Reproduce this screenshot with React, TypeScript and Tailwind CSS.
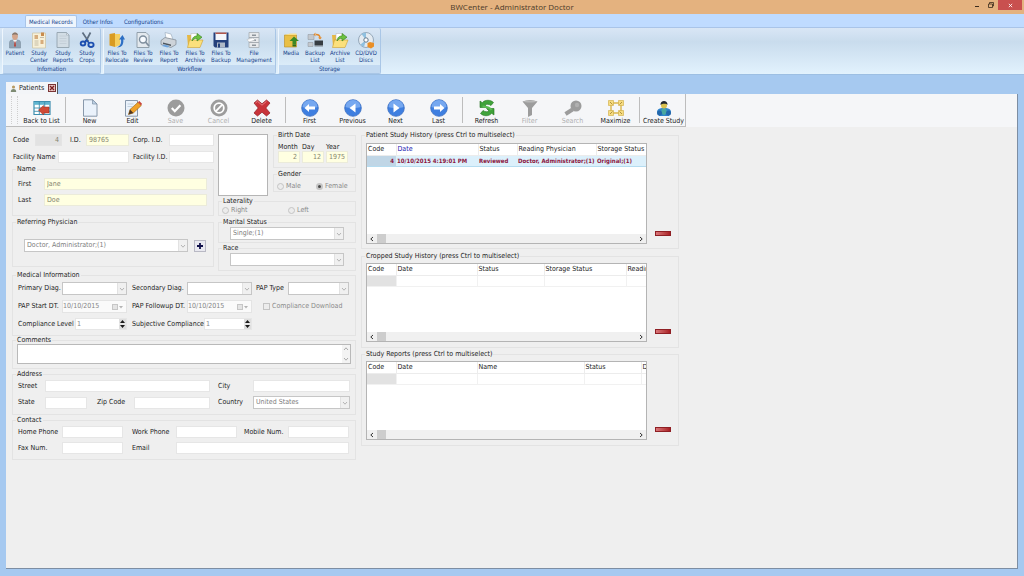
import { useId } from "react";
import type { ReactNode } from "react";
import clsx from "clsx";

/* ---------- icons ---------- */

type IconProps = { children: ReactNode; className?: string };

const Icon = ({ children, className = "size-[18px]" }: IconProps) => (
  <svg viewBox="0 0 18 18" className={className} fill="none" aria-hidden="true">
    {children}
  </svg>
);

const PatientIcon = () => (
  <Icon>
    <path d="M3.500 17V11.500Q3.500 9 6.500 9h5q3 0 3 2.500V17z" fill="#8fa3b4" stroke="#7a8d9d" strokeWidth=".6" />
    <path d="M7 9 9 12.500 11 9z" fill="#f4f4f4" />
    <path d="M8.500 10.500h1L10 15l-1 1-1-1z" fill="#b8443a" />
    <ellipse cx="9" cy="5.200" rx="2.900" ry="3.700" fill="#d3a58c" />
    <path d="M6 4.500C6 .6 12 .6 12 4.500 11 3.200 7 3.200 6 4.500z" fill="#85776c" />
  </Icon>
);

const StudyCenterIcon = () => (
  <Icon>
    <path d="M2.500 2h13v15h-13z" fill="#f7f0d8" stroke="#cfc6a8" strokeWidth=".8" />
    <path d="M4.500 4h3.500v4H4.500zM10.500 9h3v4h-3z" fill="#d6ac7c" />
    <path d="M10 6.500h4M4.500 10h4M4.500 12h4M4.500 14h4" stroke="#b9b09b" strokeWidth=".8" />
    <path d="M11 1.500h3v3.500h-3z" fill="#c98b4c" />
  </Icon>
);

const StudyReportsIcon = () => (
  <Icon>
    <path d="M3 1.500h9.500L15 4v12.500H3z" fill="#d2dde5" stroke="#93a3ae" strokeWidth=".9" />
    <path d="M5.500 5h7M5.500 7.500h7M5.500 10h7M5.500 12.500h7" stroke="#c0ccd4" strokeWidth=".8" />
    <path d="M12.500 1.500V4H15z" fill="#f7f9fa" stroke="#93a3ae" strokeWidth=".6" />
  </Icon>
);

const ScissorsIcon = () => (
  <Icon>
    <path d="M4.500 1.500 10.500 10.500M12.500 1.500 7.500 11" stroke="#5f6f82" strokeWidth="1.700" />
    <ellipse cx="5" cy="12.500" rx="2.300" ry="2" stroke="#1d4fb0" strokeWidth="1.900" />
    <ellipse cx="13" cy="13.800" rx="2.600" ry="2.200" stroke="#1d4fb0" strokeWidth="1.900" />
    <path d="m6.500 11.200 2-2 2.600 2.800" stroke="#1d4fb0" strokeWidth="1.700" />
  </Icon>
);

const RelocateIcon = () => (
  <Icon>
    <path d="M1.500 3 7 2v14l-5.500-1.500z" fill="#d99b22" />
    <path d="M7 3h5v11l-5 2z" fill="#f6cf5e" />
    <path d="M9 16.500c3.500-1.500 4.500-4.500 4-8h-2l3.500-4.500 2.500 4.500h-1.700c.5 5-1.500 8-6.300 8z" fill="#2d6fc4" />
  </Icon>
);

const ReviewIcon = () => (
  <Icon>
    <path d="M3 1.500h9l3 3v12H3z" fill="#e3e9ee" stroke="#8a98a4" strokeWidth=".9" />
    <circle cx="9" cy="8.500" r="3.500" fill="#f7fbff" stroke="#7f8f9e" strokeWidth="1.400" />
    <path d="m11.500 11 3.500 4" stroke="#7f8f9e" strokeWidth="1.800" />
  </Icon>
);

const PrinterIcon = () => (
  <Icon>
    <path d="m5 1.500 6 1.500 2 5.500-7-1z" fill="#fdfdfd" stroke="#9fb0c2" strokeWidth=".7" />
    <path d="m1 9.500 4-3L16 9v4.500l-5 3L1 13.500z" fill="#cdd3d9" stroke="#7e878f" strokeWidth=".7" />
    <path d="m3 11.500 8 2v1.500l-8-2z" fill="#4d555d" />
    <path d="m4 13.500 5.500 1.500-2 1.500L2 15z" fill="#6da3dd" />
  </Icon>
);

const ArchiveIcon = () => (
  <Icon>
    <path d="M1 4h5l1.500 1.500H13V15H2z" fill="#e6b844" />
    <path d="M5 2.500h7v8H5z" fill="#fff" stroke="#b3b3b3" strokeWidth=".5" />
    <path d="M3.500 9h13.500L14 16.500H1.500z" fill="#fbe07c" stroke="#cf9f2f" strokeWidth=".6" />
    <path d="M6 10c.5-4 2.500-5 5-5V2.500l5 3.700-5 3.800V7.500c-2.200 0-3.500.5-5 2.500z" fill="#6cc13f" stroke="#347f1b" strokeWidth=".6" />
  </Icon>
);

const FloppyIcon = () => (
  <Icon>
    <path d="M1.500 1.500h15v15H3L1.500 15z" fill="#24407c" />
    <path d="M3.500 1.500h11V9h-11z" fill="#f4f6fa" />
    <path d="M3.500 1.500h11v1.500h-11z" fill="#b0564b" />
    <path d="M5 11.500h8v5H5z" fill="#aeb8c6" />
    <path d="M6 12.500h2v4H6z" fill="#24407c" />
  </Icon>
);

const CabinetIcon = () => (
  <Icon>
    <path d="M4 1.500h10v15H4z" fill="#e7e9eb" stroke="#a7adb3" strokeWidth=".8" />
    <path d="M4 6.500h10M4 11.500h10" stroke="#a7adb3" />
    <path d="M7 3.500h4v1.500H7zM7 8.500h4v1.500H7zM7 13.500h4V15H7z" fill="#8e959c" />
    <path d="M2 8.500 8 7l2 2-6 2z" fill="#fff" stroke="#b0b4b8" strokeWidth=".5" />
  </Icon>
);

const MediaIcon = () => (
  <Icon>
    <path d="M2.500 4h12v12h-12z" fill="#e9bf45" stroke="#b88a1e" strokeWidth=".6" />
    <path d="M2.500 4 8 2.500h6.500V4z" fill="#f7df8d" />
    <path d="m12 5.500 5 4.500h-3v3.500h-3.500V10H7.500z" fill="#3b8a25" />
    <path d="M10.500 13.500H14v2h-3.500z" fill="#2d6d1b" />
  </Icon>
);

const BackupIcon = () => (
  <Icon>
    <path d="M2 3.500h6v5H2zM2 11.500h5v4H2z" fill="#c3c8cd" stroke="#8c9298" strokeWidth=".5" />
    <path d="M8.500 9.500H17V14H8.500z" fill="#363c42" />
    <path d="M8.500 14H17v1.500H8.500z" fill="#7c848c" />
    <path d="M10 3.500c3 0 4 1 4 3.500" stroke="#e48a2a" strokeWidth="1.500" />
    <path d="M12 6.500h4L14 8.500zM9.500 1.500v4l-2-2z" fill="#e48a2a" />
  </Icon>
);

const DiscIcon = () => (
  <Icon>
    <circle cx="9" cy="9" r="7.500" fill="#e4ebf1" stroke="#8fa1b3" strokeWidth=".9" />
    <path d="M9 9 4.500 3A7.300 7.300 0 0 1 9 1.700zM9 9l-5.500 4.500A7.300 7.300 0 0 0 7 16z" fill="#8fc0e0" />
    <circle cx="9" cy="9" r="2.200" fill="#fff" stroke="#64798d" />
    <path d="m13 11 4 1v3.500l-3 2-3.500-1.500v-4z" fill="#e98f27" />
  </Icon>
);

const BackListIcon = () => (
  <Icon>
    <path d="M1 2.500h16v13H1z" fill="#fff" stroke="#3e8eaf" strokeWidth="1.200" />
    <path d="M1 3h16v2.800H1z" fill="#5fb4cf" />
    <path d="M1 9h16M1 12.300h16M6.300 2.500v13M11.700 2.500v13" stroke="#3e8eaf" strokeWidth=".9" />
    <path d="m5.500 11 5-4.500V8H16v6h-5.500v2z" fill="#cf4a36" stroke="#9e2a1b" strokeWidth=".5" />
  </Icon>
);

const NewIcon = () => (
  <Icon>
    <path d="M2.500.800h9L16 5v12.200H2.500z" fill="#eaf2fb" stroke="#7d8fa3" strokeWidth=".9" />
    <path d="M11.500.800V5H16z" fill="#bfd3e8" stroke="#7d8fa3" strokeWidth=".7" />
  </Icon>
);

const EditIcon = () => (
  <Icon>
    <path d="M1.500 1.500h12v15.700h-12z" fill="#eaf2fb" stroke="#7d8fa3" strokeWidth=".9" />
    <path d="M3.500 5h6M3.500 7.500h5" stroke="#b8c8d8" strokeWidth=".8" />
    <path d="m4.500 15.500 1.500-5 8-7.200 3.300 3.200-8 7.500z" fill="#f0a22a" stroke="#9b6415" strokeWidth=".6" />
    <path d="m14 3.300 1.300-1.300 2.700 2.800-.9 1.700z" fill="#c9433a" />
    <path d="m4.500 15.500 1.500-5L9.300 14z" fill="#4b3524" />
  </Icon>
);

const SaveIcon = () => (
  <Icon>
    <circle cx="9" cy="9" r="8.500" fill="#9c9c9c" />
    <path d="m4.800 9 3 3.200 5.600-6" stroke="#fff" strokeWidth="2.200" />
  </Icon>
);

const CancelIcon = () => (
  <Icon>
    <circle cx="9" cy="9" r="8.500" fill="#9c9c9c" />
    <circle cx="9" cy="9" r="4.800" stroke="#fff" strokeWidth="1.800" />
    <path d="m12.300 5.700-6.600 6.600" stroke="#fff" strokeWidth="1.800" />
  </Icon>
);

const DeleteIcon = () => (
  <Icon>
    <path
      d="m1 4 3.500-3L9 4.800 13.500 1 17 4l-4.200 5 4.200 5-3.500 3L9 13.200 4.500 17 1 14l4.200-5z"
      fill="#c9343a"
      stroke="#8f1c22"
      strokeWidth=".7"
    />
    <path d="M2.500 4 4.500 2.300 9 6.200l4.500-3.900" stroke="#ea8589" strokeWidth=".9" />
  </Icon>
);

const NavIcon = ({ d }: { d: string }) => (
  <Icon>
    <circle cx="9" cy="9" r="8.300" fill="#3f7fe0" stroke="#3a6dc0" strokeWidth=".8" />
    <path d="M1.500 8a7.500 7 0 0 1 15 0C13 9.500 5 9.500 1.500 8z" fill="#76a8f0" />
    <path d={d} fill="#fff" />
  </Icon>
);

const RefreshIcon = () => (
  <Icon>
    <path d="M2 8.500V2l2.300 1.700C7 .5 12.500.5 15.500 3.500L13 6.500C11 5 8.500 5 7 6l2.500 2.500z" fill="#3fa33a" stroke="#21711f" strokeWidth=".6" />
    <path d="M16 9.500V16l-2.300-1.700C11 17.500 5.500 17.500 2.500 14.500l2.500-3C7 13 9.500 13 11 12L8.500 9.500z" fill="#3fa33a" stroke="#21711f" strokeWidth=".6" />
    <path d="M4.500 7.500c4 0 7 .5 9 3.500" stroke="#5cbd55" strokeWidth="2" />
  </Icon>
);

const FilterIcon = () => (
  <Icon>
    <path d="M1.500 2.500q7.500-3 15 0L11 9v7L7 18V9z" fill="#9c9c9c" />
    <ellipse cx="9" cy="2.500" rx="6" ry="1" fill="#b8b8b8" />
  </Icon>
);

const SearchIcon = () => (
  <Icon>
    <circle cx="12" cy="7" r="5.500" fill="#9c9c9c" />
    <path d="m8.500 10.500-7 4.500" stroke="#9c9c9c" strokeWidth="4" />
    <circle cx="13" cy="6" r="2.200" fill="#b0b0b0" />
  </Icon>
);

const MaximizeIcon = () => (
  <Icon>
    <path d="M4 4h10v10H4z" stroke="#d9b64e" strokeWidth="1.400" />
    <path d="M1.500 1.500h5v5h-5zM11.500 1.500h5v5h-5zM1.500 11.500h5v5h-5zM11.500 11.500h5v5h-5z" fill="#f6dc80" stroke="#cfa93f" strokeWidth=".6" />
    <path d="m3 3 2.500 2.500M15 3l-2.500 2.500M3 15l2.500-2.500M15 15l-2.500-2.500" stroke="#a98739" strokeWidth=".9" />
  </Icon>
);

const CreateStudyIcon = () => (
  <Icon>
    <path d="M2 13q0-3.500 5-4h4q5 .5 5 4l-2 4H4z" fill="#2f83cc" />
    <path d="M7 9.500h4l1 4-3 3-3-3z" fill="#4aa8a0" />
    <circle cx="9" cy="6.500" r="3" fill="#d9c04e" />
    <path d="M5.500 6C5 .5 13 .5 12.500 6 11.500 4 7 4.500 5.500 6z" fill="#22272e" />
    <circle cx="4.500" cy="14" r="2.500" fill="#2468ab" />
    <circle cx="13.500" cy="14" r="2.500" fill="#2468ab" />
  </Icon>
);

const Chevron = ({ className }: { className?: string }) => (
  <svg viewBox="0 0 6 6" className={clsx("size-[6px]", className)} fill="none" aria-hidden="true">
    <path d="m1 2 2 2.200L5 2" stroke="currentColor" />
  </svg>
);

/* ---------- form parts ---------- */

const labelCls = "whitespace-nowrap";

type FieldProps = {
  label: string;
  value?: string;
  className?: string;
  tone?: "white" | "yellow" | "gray";
  alignRight?: boolean;
  hideLabel?: boolean;
};

// Label and text box are two neighbouring grid cells
const Field = ({ label, value = "", className, tone = "white", alignRight }: FieldProps) => {
  const id = useId();
  return (
    <>
      <label htmlFor={id} className={labelCls}>{label}</label>
      <input
        id={id}
        defaultValue={value}
        readOnly
        className={clsx(
          "h-3 w-full min-w-0 border px-[2px] text-[#85856f] outline-none",
          tone === "white" && "border-[#e6e6e6] bg-white",
          tone === "yellow" && "border-[#ebebda] bg-[#ffffe1]",
          tone === "gray" && "border-[#e4e4e4] bg-[#e2e2e2]",
          alignRight && "text-right",
          className,
        )}
      />
    </>
  );
};

const SelectBox = ({ label, value = "", hideLabel, className }: FieldProps) => {
  const id = useId();
  return (
    <>
      {!hideLabel && <label htmlFor={id} className={labelCls}>{label}</label>}
      <div className={clsx("flex h-[13px] min-w-0 border border-[#c6c6c6] bg-white", className)}>
        <select
          id={id}
          aria-label={hideLabel ? label : undefined}
          disabled
          className="min-w-0 flex-1 appearance-none px-[2px] leading-[11px] text-[#7d7d7d] opacity-100"
        >
          <option>{value}</option>
        </select>
        <span className="flex w-[9px] items-center justify-center border-l border-[#e2e2e2] bg-[#f0f0f0] text-[#b4b4b4]">
          <Chevron />
        </span>
      </div>
    </>
  );
};

const DateBox = ({ label, value }: { label: string; value: string }) => {
  const id = useId();
  return (
    <>
      <label htmlFor={id} className={labelCls}>{label}</label>
      <div className="flex h-[13px] items-center border border-[#e4e4e4] bg-[#fafafa] pr-[2px]">
        <input id={id} defaultValue={value} disabled className="w-0 flex-1 text-[#858585]" />
        <button type="button" aria-label={`Open calendar for ${label}`} className="flex items-center text-[#b4b4b4]">
          <span className="size-[6px] border border-[#c6c6c6] bg-[#e4e4e4]" />
          <svg viewBox="0 0 6 6" className="size-[6px]"><path d="M1 2h4L3 4.500z" fill="currentColor" /></svg>
        </button>
      </div>
    </>
  );
};

const SpinBox = ({ label, value, className }: { label: string; value: string; className: string }) => {
  const id = useId();
  return (
    <div className="col-span-2 flex items-center justify-between">
      <label htmlFor={id} className={labelCls}>{label}</label>
      <div className={clsx("flex h-3 items-stretch border border-[#e6e6e6] bg-white", className)}>
        <input id={id} defaultValue={value} className="w-0 flex-1 px-[1px] text-[#858585] outline-none" />
        <button type="button" aria-label={`Change ${label}`} className="w-[7px] bg-[#dedede]">
          <svg viewBox="0 0 7 10" className="h-[10px] w-[7px]">
            <path d="M1 4h5L3.500 1zM1 6h5L3.500 9z" fill="#1c1c1c" />
            <path d="M0 5h7" stroke="#fff" strokeWidth=".6" />
          </svg>
        </button>
      </div>
    </div>
  );
};

const Radio = ({ name, label, checked }: { name: string; label: string; checked?: boolean }) => (
  <label className="flex items-center gap-[2px] text-[#8a8a8a]">
    <input
      type="radio"
      name={name}
      defaultChecked={checked}
      disabled
      className="size-[7px] appearance-none rounded-full border border-[#c4c4c4] bg-[#ececec] checked:border-2 checked:bg-[#4a4a4a]"
    />
    {label}
  </label>
);

const Group = ({ title, className, children }: { title: string; className?: string; children: ReactNode }) => (
  <fieldset className={clsx("min-w-0 border border-[#e3e3e3]", className)}>
    <legend className="ml-[3px] px-[1px] leading-[8px]">{title}</legend>
    {children}
  </fieldset>
);

/* ---------- history tables ---------- */

type Column = { title: string; width: string; sorted?: boolean };

const studyColumns: Column[] = [
  { title: "Code", width: "w-[29px]" },
  { title: "Date", width: "w-[82px]", sorted: true },
  { title: "Status", width: "w-[39px]" },
  { title: "Reading Physician", width: "w-[79px]" },
  { title: "Storage Status", width: "w-auto" },
];

const croppedColumns: Column[] = [
  { title: "Code", width: "w-[29px]" },
  { title: "Date", width: "w-[81px]" },
  { title: "Status", width: "w-[67px]" },
  { title: "Storage Status", width: "w-[82px]" },
  { title: "Reading Physician", width: "w-auto" },
];

const reportColumns: Column[] = [
  { title: "Code", width: "w-[29px]" },
  { title: "Date", width: "w-[81px]" },
  { title: "Name", width: "w-[107px]" },
  { title: "Status", width: "w-[57px]" },
  { title: "Description", width: "w-auto" },
];

type HistoryProps = {
  title: string;
  columns: Column[];
  row?: string[];
  className: string;
  height: string;
};

const History = ({ title, columns, row, className, height }: HistoryProps) => (
  <Group title={title} className={className}>
    <div className="flex items-end gap-2 pr-[7px] pl-1">
      <div className={clsx("flex min-w-0 flex-1 flex-col border border-[#b4b4b4] bg-white", height)}>
        <div className="flex-1 overflow-hidden">
          <table className="w-full table-fixed border-collapse text-left whitespace-nowrap">
            <thead>
              <tr className="h-[11px]">
                {columns.map((col) => (
                  <th
                    key={col.title}
                    className={clsx(
                      "overflow-hidden border-r border-b border-[#ececec] p-0 pl-[1px] font-normal last:border-r-0",
                      col.width,
                      col.sorted && "text-[#2020b0]",
                    )}
                  >
                    {col.title}
                  </th>
                ))}
              </tr>
            </thead>
            <tbody>
              <tr className={clsx("h-[11px]", row && "bg-[#dcf0fb] text-[#8b1540]")}>
                {columns.map((col, i) => (
                  <td
                    key={col.title}
                    className={clsx(
                      "border-b p-0 pl-[1px]",
                      row ? "border-[#b5dcf0] text-[6px] font-bold" : "border-r border-[#f1f1f1] last:border-r-0",
                      i === 0 && (row ? "bg-[#c0d6e6] pr-[2px] text-right" : "bg-[#e2e2e2]"),
                    )}
                  >
                    {row?.[i]}
                  </td>
                ))}
              </tr>
            </tbody>
          </table>
        </div>
        <div className="flex h-[9px] items-center justify-between bg-[#f0f0f0] px-[2px] text-[#333]">
          <span className="flex items-center gap-[2px]">
            <Chevron className="rotate-90" />
            <span className="h-[9px] w-[9px] bg-[#cdcdcd]" />
          </span>
          <Chevron className="-rotate-90" />
        </div>
      </div>
      <button
        type="button"
        aria-label={`Remove from ${title}`}
        className="mb-2 h-[5px] w-4 border border-[#8f1f24] bg-linear-to-r from-[#d9767a] to-[#a81c24]"
      />
    </div>
  </Group>
);

/* ---------- ribbon and toolbar data ---------- */

const ribbonGroups = [
  {
    title: "Infomation",
    items: [
      { label: "Patient", icon: <PatientIcon />, width: "w-6" },
      { label: "Study Center", icon: <StudyCenterIcon />, width: "w-6" },
      { label: "Study Reports", icon: <StudyReportsIcon />, width: "w-6" },
      { label: "Study Crops", icon: <ScissorsIcon />, width: "w-6" },
    ],
  },
  {
    title: "Workflow",
    items: [
      { label: "Files To Relocate", icon: <RelocateIcon />, width: "w-[26px]" },
      { label: "Files To Review", icon: <ReviewIcon />, width: "w-[26px]" },
      { label: "Files To Report", icon: <PrinterIcon />, width: "w-[26px]" },
      { label: "Files To Archive", icon: <ArchiveIcon />, width: "w-[26px]" },
      { label: "Files To Backup", icon: <FloppyIcon />, width: "w-[26px]" },
      { label: "File Management", icon: <CabinetIcon />, width: "w-10" },
    ],
  },
  {
    title: "Storage",
    items: [
      { label: "Media", icon: <MediaIcon />, width: "w-6" },
      { label: "Backup List", icon: <BackupIcon />, width: "w-6" },
      { label: "Archive List", icon: <ArchiveIcon />, width: "w-[26px]" },
      { label: "CD/DVD Discs", icon: <DiscIcon />, width: "w-[26px]" },
    ],
  },
];

const toolbarGroups = [
  [{ label: "Back to List", icon: <BackListIcon /> }],
  [
    { label: "New", icon: <NewIcon /> },
    { label: "Edit", icon: <EditIcon /> },
    { label: "Save", icon: <SaveIcon />, disabled: true },
    { label: "Cancel", icon: <CancelIcon />, disabled: true },
    { label: "Delete", icon: <DeleteIcon /> },
  ],
  [
    { label: "First", icon: <NavIcon d="M3.500 9 8 5v2.500h6v3H8V13z" /> },
    { label: "Previous", icon: <NavIcon d="M5.500 9 11.500 4.500v9z" /> },
    { label: "Next", icon: <NavIcon d="M12.500 9 6.500 4.500v9z" /> },
    { label: "Last", icon: <NavIcon d="M14.500 9 10 5v2.500H4v3h6V13z" /> },
  ],
  [
    { label: "Refresh", icon: <RefreshIcon /> },
    { label: "Filter", icon: <FilterIcon />, disabled: true },
    { label: "Search", icon: <SearchIcon />, disabled: true },
    { label: "Maximize", icon: <MaximizeIcon /> },
  ],
  [{ label: "Create Study", icon: <CreateStudyIcon /> }],
];

/* ---------- window sections ---------- */

const TitleBar = () => (
  <header className="grid h-[14px] grid-cols-[1fr_auto_1fr] bg-[#e4b27f]">
    <h1 className="col-start-2 font-['Open_Sans',sans-serif] text-[8px] leading-[14px] text-[#4a3a2a]">
      BWCenter - Administrator Doctor
    </h1>
    <div className="flex h-[10px] justify-end pr-[2px] text-[#3b2c1c]">
      <button type="button" aria-label="Minimize" className="flex w-[14px] items-center justify-center">
        <span className="mt-[2px] h-[1px] w-1 bg-current" />
      </button>
      <button type="button" aria-label="Restore" className="flex w-[14px] items-center justify-center">
        <svg viewBox="0 0 6 6" className="size-[6px]" fill="none" stroke="currentColor" strokeWidth=".8">
          <path d="M.5 2h4v3.500h-4zM1.500 2V.5h4V4h-1" />
        </svg>
      </button>
      <button type="button" aria-label="Close" className="flex w-6 items-center justify-center bg-[#c9504f] text-white">
        <svg viewBox="0 0 6 6" className="size-[5px]" stroke="currentColor">
          <path d="m1 1 4 4m0-4L1 5" />
        </svg>
      </button>
    </div>
  </header>
);

const Ribbon = () => (
  <div className="text-[6px] text-[#15428b]">
    <nav className="flex h-[13px] items-end bg-[#bfdbff] pl-[25px]">
      <button type="button" className="h-3 rounded-t-[2px] border border-b-0 border-[#a9c4e8] bg-[#eef5fd] px-[3px]">
        Medical Records
      </button>
      <button type="button" className="h-3 px-[6px]">Other Infos</button>
      <button type="button" className="h-3 px-[5px]">Configurations</button>
    </nav>
    <div className="flex h-12 gap-[2px] border-y border-t-[#a9c4e8] border-b-[#9dbfe3] bg-linear-to-b from-[#d9e6f5] via-[#c9dced] via-30% to-[#e2f2fd] pl-[2px]">
      {ribbonGroups.map((group) => (
        <section
          key={group.title}
          className="flex flex-col rounded-[2px] border border-t-0 border-[#a9c6e6] border-l-[#eef6fd]"
        >
          <div className="flex flex-1 pt-[3px] pr-[1px]">
            {group.items.map((item) => (
              <button key={item.label} type="button" className={clsx("flex flex-col items-center", item.width)}>
                {item.icon}
                <span className="text-center leading-[7px]">{item.label}</span>
              </button>
            ))}
          </div>
          <h2 className="h-2 bg-[#c2d9f1] text-center leading-[8px]">{group.title}</h2>
        </section>
      ))}
    </div>
  </div>
);

const Toolbar = () => (
  <div className="flex bg-[#f5f6f8]">
    <div className="flex h-[33px] items-stretch border-r border-b border-[#bdbdbd] pl-[5px]" role="toolbar">
      <span className="my-[2px] mr-[2px] w-[7px] border-x border-dotted border-[#cfcfcf]" />
      {toolbarGroups.map((group, i) => (
        <div key={i} className="flex">
          {i > 0 && <span className="mx-[2px] my-[3px] w-[1px] bg-[#bdbdbd]" />}
          {group.map((item) => (
            <button
              key={item.label}
              type="button"
              disabled={"disabled" in item}
              className="flex w-[43px] flex-col items-center pt-[5px] whitespace-nowrap disabled:text-[#b0b0b0]"
            >
              {item.icon}
              <span className="leading-[9px]">{item.label}</span>
            </button>
          ))}
        </div>
      ))}
    </div>
  </div>
);

const PatientForm = () => (
  <form className="min-w-0">
    <div className="grid grid-cols-[202px_minmax(0,1fr)] gap-x-1">
      <div className="pt-[3px]">
        <div className="flex flex-col gap-[5px] pl-[1px]">
          <div className="grid grid-cols-[22px_27px_8px_16px_43px_4px_36px_1fr] items-center [&>label:nth-of-type(2)]:col-start-4 [&>label:nth-of-type(3)]:col-start-7">
            <Field label="Code" value="4" tone="gray" alignRight />
            <Field label="I.D." value="98765" tone="yellow" />
            <Field label="Corp. I.D." />
          </div>
          <div className="grid grid-cols-[45px_71px_4px_36px_1fr] items-center [&>label:nth-of-type(2)]:col-start-4">
            <Field label="Facility Name" />
            <Field label="Facility I.D." />
          </div>
        </div>
        <Group title="Name" className="mt-[2px]">
          <div className="grid grid-cols-[26px_1fr] items-center gap-y-1 pt-[5px] pr-[6px] pb-[9px] pl-[5px]">
            <Field label="First" value="Jane" tone="yellow" />
            <Field label="Last" value="Doe" tone="yellow" />
          </div>
        </Group>
        <Group title="Referring Physician" className="mt-[2px]">
          <div className="flex items-center gap-[6px] pt-[13px] pr-[7px] pb-[14px] pl-[11px]">
            <SelectBox label="Referring Physician" hideLabel value="Doctor, Administrator;(1)" className="flex-1" />
            <button
              type="button"
              aria-label="Add physician"
              className="flex size-3 items-center justify-center border border-[#b9b9c4] bg-[#e9e9f0]"
            >
              <svg viewBox="0 0 6 6" className="size-[6px]"><path d="M3 0v6M0 3h6" stroke="#10104a" strokeWidth="1.800" /></svg>
            </button>
          </div>
        </Group>
      </div>

      <div>
        <div className="flex gap-[5px]">
          <div className="mt-[3px] h-[62px] w-[50px] border border-[#b5b5b5] bg-white" />
          <div className="flex-1">
            <Group title="Birth Date">
              <div className="grid grid-flow-col grid-cols-[22px_22px_22px] grid-rows-[8px_11px] gap-x-[2px] pt-1 pb-[5px] pl-1 leading-[8px]">
                <Field label="Month" value="2" tone="yellow" alignRight />
                <Field label="Day" value="12" tone="yellow" alignRight />
                <Field label="Year" value="1975" tone="yellow" alignRight />
              </div>
            </Group>
            <Group title="Gender" className="mt-[2px]">
              <div className="grid h-[13px] grid-cols-[39px_1fr] pt-[3px] pl-[3px] leading-[9px]">
                <Radio name="gender" label="Male" />
                <Radio name="gender" label="Female" checked />
              </div>
            </Group>
          </div>
        </div>
        <Group title="Laterality" className="mt-[1px]">
          <div className="grid h-[10px] grid-cols-[66px_1fr] pl-[3px] leading-[9px]">
            <Radio name="laterality" label="Right" />
            <Radio name="laterality" label="Left" />
          </div>
        </Group>
        <Group title="Marital Status" className="mt-[2px]">
          <div className="px-[11px] pt-[1px] pb-[2px]">
            <SelectBox label="Marital Status" hideLabel value="Single;(1)" />
          </div>
        </Group>
        <Group title="Race" className="mt-[1px]">
          <div className="px-[11px] pt-[1px] pb-1">
            <SelectBox label="Race" hideLabel />
          </div>
        </Group>
      </div>
    </div>

    <Group title="Medical Information">
      <div className="grid grid-cols-[44px_65px_60px_65px_36px_1fr] items-center gap-y-[5px] pt-[3px] pr-[6px] pb-[5px] pl-[5px] [&>label:nth-of-type(2)]:pl-[5px] [&>label:nth-of-type(3)]:pl-1 [&>label:nth-of-type(5)]:pl-[5px]">
        <SelectBox label="Primary Diag." />
        <SelectBox label="Secondary Diag." />
        <SelectBox label="PAP Type" />
        <DateBox label="PAP Start DT." value="10/10/2015" />
        <DateBox label="PAP Followup DT." value="10/10/2015" />
        <div className="col-span-2 pl-[11px]">
          <label className="flex items-center gap-[2px] text-[#8a8a8a]">
            <input type="checkbox" disabled className="size-[7px] appearance-none border border-[#c4c4c4] bg-[#ececec]" />
            Compliance Download
          </label>
        </div>
        <SpinBox label="Compliance Level" value="1" className="w-[52px]" />
        <div className="col-span-2 pl-[5px]">
          <SpinBox label="Subjective Compliance" value="1" className="w-12" />
        </div>
      </div>
    </Group>

    <Group title="Comments">
      <div className="px-1 pb-1">
        <div className="flex h-5 border border-[#b9b9b9] bg-white">
          <textarea aria-label="Comments" className="min-w-0 flex-1 resize-none px-[2px] outline-none" />
          <span className="flex w-2 flex-col items-center justify-between bg-[#f3f3f3] py-[1px] text-[#aaa]">
            <Chevron className="rotate-180" />
            <Chevron />
          </span>
        </div>
      </div>
    </Group>

    <Group title="Address" className="mt-[1px]">
      <div className="flex flex-col gap-1 pt-[2px] pr-[5px] pb-[5px] pl-[5px]">
        <div className="grid grid-cols-[27px_165px_8px_35px_1fr] items-center [&>label:nth-of-type(2)]:col-start-4">
          <Field label="Street" />
          <Field label="City" />
        </div>
        <div className="grid grid-cols-[27px_42px_10px_37px_76px_8px_35px_1fr] items-center [&>label:nth-of-type(2)]:col-start-4 [&>label:nth-of-type(3)]:col-start-7">
          <Field label="State" />
          <Field label="Zip Code" />
          <SelectBox label="Country" value="United States" />
        </div>
      </div>
    </Group>

    <Group title="Contact" className="mt-[1px]">
      <div className="grid grid-cols-[44px_61px_9px_44px_61px_7px_44px_1fr] items-center gap-y-1 pt-[2px] pr-[6px] pb-[5px] pl-[5px] [&>label:nth-of-type(2)]:col-start-4 [&>label:nth-of-type(3)]:col-start-7 [&>label:nth-of-type(5)]:col-start-4">
        <Field label="Home Phone" />
        <Field label="Work Phone" />
        <Field label="Mobile Num." />
        <Field label="Fax Num." />
        <Field label="Email" className="col-span-4" />
      </div>
    </Group>
  </form>
);

const App = () => (
  <div className="flex min-h-screen flex-col bg-[#a6c9f0] font-['DejaVu_Sans_Condensed','DejaVu_Sans',sans-serif] text-[7px] leading-[9px] text-[#1c1c1c]">
    <TitleBar />
    <Ribbon />
    <main className="flex flex-1 flex-col px-[6px] pt-[7px] pb-[7px]">
      <div className="flex">
        <div className="flex h-3 items-center gap-[2px] border-r border-[#555] bg-[#f3f5f8] pr-[1px] pl-1">
          <Icon className="size-[7px]">
            <circle cx="9" cy="5" r="4" fill="#b89a62" />
            <path d="M2 18q0-8 7-8t7 8z" fill="#7d8a72" />
          </Icon>
          <span>Patients</span>
          <button type="button" aria-label="Close Patients" className="ml-[2px] flex size-2 items-center justify-center border border-[#7a3434] bg-[#e8c4c2]">
            <svg viewBox="0 0 6 6" className="size-[6px]" stroke="#7a1c1c" strokeWidth="1.300"><path d="m1 1 4 4m0-4L1 5" /></svg>
          </button>
        </div>
      </div>
      <div className="flex flex-1 flex-col border-r border-b border-[#7d8ea3] bg-[#efefef]">
        <Toolbar />
        <div className="grid grid-cols-[minmax(0,344px)_minmax(0,318px)] items-start gap-[5px] pt-1 pl-[6px]">
          <PatientForm />
          <div>
            <History
              title="Patient Study History (press Ctrl to multiselect)"
              columns={studyColumns}
              row={["4", "10/10/2015 4:19:01 PM", "Reviewed", "Doctor, Administrator;(1)", "Original;(1)"]}
              className="pt-1 pb-1"
              height="h-[101px]"
            />
            <History
              title="Cropped Study History (press Ctrl to multiselect)"
              columns={croppedColumns}
              className="mt-[3px] pt-[3px] pb-[5px]"
              height="h-[79px]"
            />
            <History
              title="Study Reports (press Ctrl to multiselect)"
              columns={reportColumns}
              className="mt-[2px] pt-[3px] pb-[5px]"
              height="h-[79px]"
            />
          </div>
        </div>
      </div>
    </main>
  </div>
);

export default App;
